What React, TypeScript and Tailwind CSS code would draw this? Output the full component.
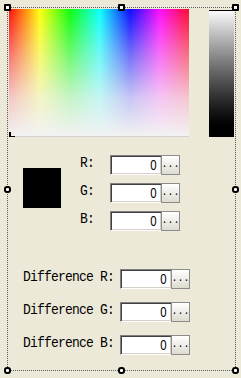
import React from "react";

const mono = { fontFamily: '"Liberation Mono", "DejaVu Sans Mono", monospace' };
const sans = { fontFamily: '"Liberation Sans", Arial, sans-serif' };

function Field({ inputW }: { inputW: string }) {
  return (
    <div className="flex h-[20px]">
      <div
        className={`${inputW} h-[20px] bg-white border-t border-l border-b border-t-[#808080] border-l-[#808080] border-b-[#ffffff] shadow-[inset_1px_1px_0_#404040,inset_-1px_-1px_0_#d4d0c8] flex items-center justify-end pr-[4px] text-[12px] text-black leading-none`}
        style={sans}
      >
        <span className="inline-block scale-y-[1.2] scale-x-[0.95]">0</span>
      </div>
      <div className="w-[19px] h-[20px] border border-[#8c8c8c] bg-gradient-to-b from-[#ffffff] to-[#dedbd0] flex items-end justify-center pb-[4px] text-[10px] leading-none text-black" style={mono}>
        ...
      </div>
    </div>
  );
}

function Handle({ round }: { round?: boolean }) {
  return (
    <div
      className={`w-[7px] h-[7px] bg-white border-2 border-black ${round ? "rounded-[3px]" : "rounded-[1px]"}`}
    />
  );
}

export default function App() {
  return (
    <div className="relative w-[241px] h-[378px] bg-[#ECE9D8] overflow-hidden">
      <div className="flex flex-col">
        <div className="flex pt-[9px] pl-[9px]">
          <div className="flex flex-col">
            <div
              className="relative w-[180px] h-[127px]"
              style={{
                background:
                  "linear-gradient(to right, #ff0000 0px, #ffff00 31px, #00ff00 61px, #00ffff 91px, #0000ff 121px, #ff00ff 151px, #ff0022 180px)",
              }}
            >
              <div
                className="absolute inset-0"
                style={{
                  background:
                    "linear-gradient(to bottom, rgba(242,242,242,0.05) 0%, rgba(242,242,242,0.45) 35%, rgba(242,242,242,0.82) 70%, rgba(242,242,242,1) 100%)",
                }}
              />
              <div className="absolute left-0 bottom-[-1px] w-[2px] h-[5px] bg-black" />
              <div className="absolute left-0 bottom-[-1px] w-[6px] h-[1px] bg-black" />
            </div>
            <div className="w-[180px] h-[1px] bg-[#d2d2d2]" />
          </div>
          <div className="ml-[20px] mt-[1px] w-[25px] h-[127px] border-t border-black bg-gradient-to-b from-[#fafafa] to-[#000000]" />
        </div>

        <div className="flex mt-[18px] pl-[23px]">
          <div className="w-[38px] h-[40px] bg-black mt-[13px]" />
          <div className="flex flex-col gap-[8px] ml-[19px]">
            {["R:", "G:", "B:"].map((l) => (
              <div key={l} className="flex items-center h-[20px]">
                <div
                  className="w-[30px] text-[13px] tracking-[-0.8px] leading-none text-black -mt-[6px]"
                  style={mono}
                >
                  <span className="inline-block scale-y-[1.15] origin-left">{l}</span>
                </div>
                <Field inputW="w-[51px]" />
              </div>
            ))}
          </div>
        </div>

        <div className="flex flex-col gap-[13px] mt-[38px] pl-[23px]">
          {["Difference R:", "Difference G:", "Difference B:"].map((l) => (
            <div key={l} className="flex items-center h-[20px]">
              <div
                className="w-[97px] text-[13px] tracking-[-0.8px] leading-none text-black -mt-[5px] whitespace-nowrap"
                style={mono}
              >
                <span className="inline-block scale-y-[1.15] origin-left">{l}</span>
              </div>
              <Field inputW="w-[51px]" />
            </div>
          ))}
        </div>
      </div>

      <div className="absolute left-[7px] top-[7px] w-[229px] h-[364px] border border-dotted border-[#5a5a5a] pointer-events-none" />
      <div className="absolute left-[4px] top-[4px]"><Handle /></div>
      <div className="absolute left-[118px] top-[4px]"><Handle /></div>
      <div className="absolute left-[232px] top-[4px]"><Handle /></div>
      <div className="absolute left-[4px] top-[186px]"><Handle round /></div>
      <div className="absolute left-[232px] top-[186px]"><Handle round /></div>
      <div className="absolute left-[4px] top-[367px]"><Handle round /></div>
      <div className="absolute left-[118px] top-[367px]"><Handle round /></div>
      <div className="absolute left-[232px] top-[367px]"><Handle round /></div>
    </div>
  );
}
